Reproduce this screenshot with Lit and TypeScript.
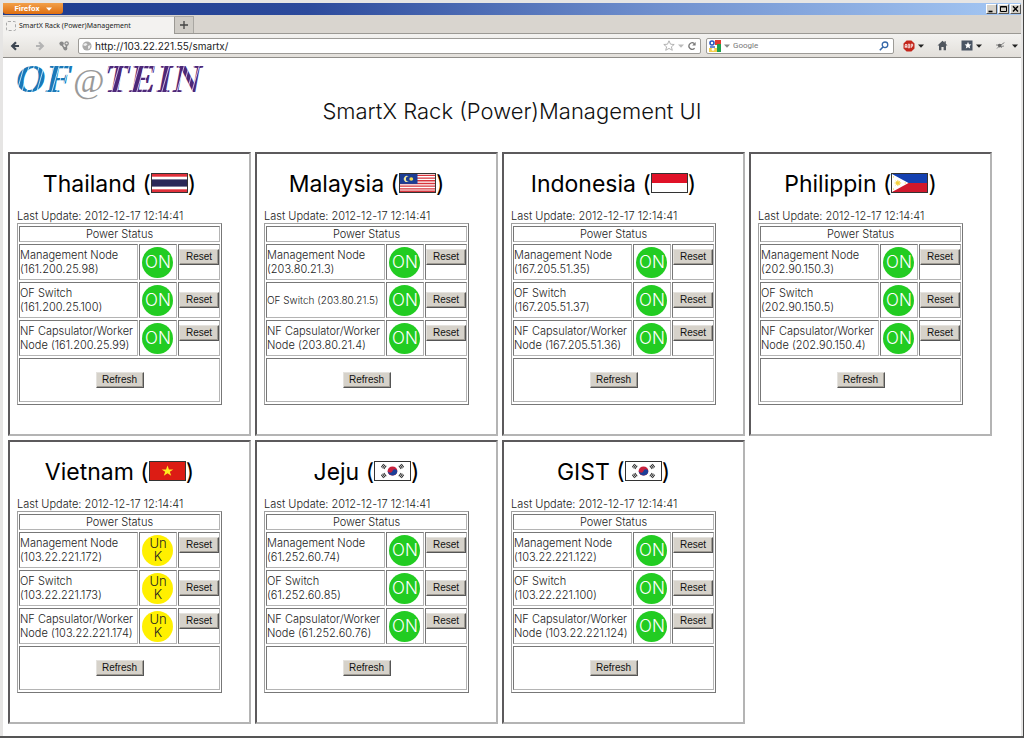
import { LitElement, html, svg, css } from "lit";
import { customElement, property } from "lit/decorators.js";
import { classMap } from "lit/directives/class-map.js";

type Status = "ON" | "Unk";

interface RackNode {
  name: string;
  ip: string;
  status: Status;
}

interface Site {
  name: string;
  flag: string;
  updated: string;
  nodes: RackNode[];
}

const UPDATED = "2012-12-17 12:14:41";

const site = (name: string, flag: string, ips: string[], status: Status = "ON"): Site => ({
  name,
  flag,
  updated: UPDATED,
  nodes: ["Management Node", "OF Switch", "NF Capsulator/Worker Node"].map((n, i) => ({
    name: n,
    ip: ips[i],
    status,
  })),
});

const SITES: Site[] = [
  site("Thailand", "th", ["161.200.25.98", "161.200.25.100", "161.200.25.99"]),
  site("Malaysia", "my", ["203.80.21.3", "203.80.21.5", "203.80.21.4"]),
  site("Indonesia", "id", ["167.205.51.35", "167.205.51.37", "167.205.51.36"]),
  site("Philippin", "ph", ["202.90.150.3", "202.90.150.5", "202.90.150.4"]),
  site("Vietnam", "vn", ["103.22.221.172", "103.22.221.173", "103.22.221.174"], "Unk"),
  site("Jeju", "kr", ["61.252.60.74", "61.252.60.85", "61.252.60.76"]),
  site("GIST", "kr", ["103.22.221.122", "103.22.221.100", "103.22.221.124"]),
];

// Longest "name (ip)" label that still fits the first column on one line.
const ONE_LINE = 23;

const koreaBars = (x: number, y: number, angle: number) => svg`
  <g transform="translate(${x} ${y}) rotate(${angle})" stroke="#222" stroke-width="1">
    <path d="M-2.2 -1.6H2.2M-2.2 0H2.2M-2.2 1.6H2.2" />
  </g>`;

const FLAGS: Record<string, unknown> = {
  th: svg`<rect width="36" height="20" fill="#e0303a" /><rect y="3" width="36" height="14" fill="#fff" /><rect y="6" width="36" height="8" fill="#2a2858" />`,
  my: svg`<rect width="36" height="20" fill="#fff" />
    <path d="M0 1.5H36M0 4.5H36M0 7.5H36M0 10.5H36M0 13.5H36M0 16.5H36M0 19.2H36" stroke="#d8343c" stroke-width="1.5" />
    <rect width="18" height="11" fill="#1c3d94" />
    <path d="M9 2.6A3.4 3.4 0 1 0 9 8.4A2.9 2.9 0 1 1 9 2.6Z" fill="#f2e9a0" />
    <circle cx="11.6" cy="5.5" r="2" fill="#f4dc50" />`,
  id: svg`<rect width="36" height="20" fill="#fff" /><rect width="36" height="10" fill="#e01228" />`,
  ph: svg`<rect width="36" height="20" fill="#d0182c" /><rect width="36" height="10" fill="#1440b0" />
    <path d="M0 0L17 10L0 20Z" fill="#fff" />
    <circle cx="6" cy="10" r="2" fill="#f6cf3a" />
    <path d="M6 6.6V13.4M2.6 10H9.4M3.6 7.6L8.4 12.4M8.4 7.6L3.6 12.4M1.5 2.5V4M1.5 16V17.5M13 10H14.4" stroke="#f6cf3a" stroke-width=".9" />`,
  vn: svg`<rect width="36" height="20" fill="#dc1c14" />
    <path d="M18 4L19.5 8.3H24L20.4 10.9L21.8 15.2L18 12.6L14.2 15.2L15.6 10.9L12 8.3H16.5Z" fill="#ffee20" />`,
  kr: svg`<rect width="36" height="20" fill="#fff" />
    <circle cx="18" cy="10" r="5" fill="#c8203c" />
    <path d="M13.2 8.6A2.5 2.5 0 0 0 18 10A2.5 2.5 0 0 1 22.9 11A5 5 0 1 1 13.2 8.6Z" fill="#1c3f98" />
    ${koreaBars(9, 5, -56)}${koreaBars(27, 5, 56)}${koreaBars(9, 15, 56)}${koreaBars(27, 15, -56)}`,
};

@customElement("site-panel")
export class SitePanel extends LitElement {
  @property({ attribute: false }) site!: Site;

  static styles = css`
    :host {
      display: block;
      box-sizing: border-box;
      min-height: 284px;
      border: 2px solid;
      border-color: #5c5a5c #b4b4b4 #b4b4b4 #5c5a5c;
      padding: 18px 27px 24px 7px;
      color: #222;
      font-family: Inter, "Liberation Sans", sans-serif;
      font-size: 11px;
      font-weight: 300;
      line-height: 14px;
    }
    .name {
      display: flex;
      justify-content: center;
      align-items: center;
      margin: 0 0 13px;
      color: #000;
      font-size: 23px;
      font-weight: 400;
      line-height: 24px;
      white-space: pre;
    }
    .flag {
      display: block;
      width: 37px;
      height: 20px;
      border: 1px solid #333;
      box-sizing: border-box;
      margin-bottom: 2px;
    }
    .updated {
      margin: 0;
      white-space: nowrap;
    }
    .status {
      width: 100%;
      table-layout: fixed;
      border: 1px solid;
      border-color: #a0a0a0 #777 #777 #a0a0a0;
      border-collapse: separate;
      border-spacing: 1px 2px;
    }
    .status th,
    .status td {
      box-sizing: border-box;
      padding: 0;
      border: 1px solid;
      border-color: #777 #b4b4b4 #b4b4b4 #777;
    }
    .lamp-col {
      width: 38px;
    }
    .action-col {
      width: 42px;
    }
    .status .title {
      height: 16px;
      font-weight: 300;
      text-align: center;
    }
    .status .node {
      height: 36px;
      font-weight: 300;
      text-align: left;
    }
    .status .short {
      font-size: 10px;
      white-space: nowrap;
    }
    .lamp {
      display: flex;
      align-items: center;
      justify-content: center;
      width: 31px;
      height: 31px;
      margin: 0 auto;
      border-radius: 50%;
      background: #22cc22;
      color: #fff;
      font-size: 17px;
      text-align: center;
    }
    .unknown {
      background: #fff000;
      color: #222;
      font-size: 13px;
      line-height: 13px;
    }
    .status .action {
      vertical-align: top;
      padding-top: 4px;
    }
    .status .centered {
      vertical-align: middle;
      padding-top: 0;
    }
    .button {
      display: block;
      box-sizing: border-box;
      width: 40px;
      height: 16px;
      padding: 0;
      border: 1px solid;
      border-color: #e4e2de #555 #555 #e4e2de;
      background: #d6d2ca;
      color: #111;
      font: 10px/14px "Liberation Sans", Arial, sans-serif;
      box-shadow: inset -1px -1px #a09c94;
    }
    .refresh {
      width: 48px;
      margin: 0 auto;
    }
    .status .footer {
      height: 44px;
    }
  `;

  render() {
    const s = this.site;
    return html`
      <h2 class="name">${s.name} (<svg class="flag" viewBox="0 0 36 20" preserveAspectRatio="none" role="img" aria-label="${s.name}">${FLAGS[s.flag]}</svg>)</h2>
      <p class="updated">Last Update: ${s.updated}</p>
      <table class="status">
        <colgroup>
          <col />
          <col class="lamp-col" />
          <col class="action-col" />
        </colgroup>
        <thead>
          <tr><th class="title" colspan="3">Power Status</th></tr>
        </thead>
        <tbody>
          ${s.nodes.map((n, i) => {
            const label = `${n.name} (${n.ip})`;
            return html`<tr>
              <th class=${classMap({ node: true, short: label.length <= ONE_LINE })} scope="row">${label}</th>
              <td>
                <div class=${classMap({ lamp: true, unknown: n.status === "Unk" })}>
                  ${n.status === "ON" ? "ON" : html`<span>Un<br />K</span>`}
                </div>
              </td>
              <td class=${classMap({ action: true, centered: i === 1 })}>
                <button class="button" type="button">Reset</button>
              </td>
            </tr>`;
          })}
          <tr>
            <td class="footer" colspan="3"><button class="button refresh" type="button">Refresh</button></td>
          </tr>
        </tbody>
      </table>
    `;
  }
}

@customElement("browser-chrome")
export class BrowserChrome extends LitElement {
  static styles = css`
    :host {
      display: block;
      font-family: Roboto, "Liberation Sans", sans-serif;
      font-size: 8px;
      color: #222;
    }
    button {
      padding: 0;
      border: 0;
      background: none;
      font: inherit;
      color: inherit;
    }
    svg {
      display: block;
    }
    .titlebar {
      display: flex;
      justify-content: space-between;
      height: 12px;
      background: linear-gradient(90deg, #1c3b8e, #2c4a9c 30%, #7191cf 65%, #a5c8f4);
    }
    .firefox {
      display: flex;
      align-items: center;
      justify-content: center;
      gap: 6px;
      width: 60px;
      height: 11px;
      border-radius: 0 0 3px 3px;
      background: linear-gradient(#f2a04a, #df6f10);
      color: #fff;
      font-weight: 700;
      line-height: 10px;
    }
    .controls {
      display: flex;
      align-items: center;
      gap: 1px;
    }
    .control {
      box-sizing: border-box;
      width: 11px;
      height: 10px;
      border: 1px solid;
      border-color: #fff #555 #555 #fff;
      background: #d6d2ca;
    }
    .tabs {
      display: flex;
      align-items: stretch;
      height: 19px;
      padding-top: 1px;
      box-sizing: border-box;
      border-bottom: 1px solid #9b9994;
      background: #d9d5cf;
    }
    .tab {
      display: flex;
      align-items: center;
      gap: 3px;
      width: 172px;
      margin-bottom: -1px;
      padding: 0 0 0 3px;
      box-sizing: border-box;
      border-right: 1px solid #9b9994;
      border-top: 1px solid #bbb;
      background: #f3f2f0;
      font: 7px "Noto Sans", sans-serif;
      white-space: nowrap;
    }
    .tab-icon {
      box-sizing: border-box;
      width: 10px;
      height: 10px;
      border: 1px dashed #aaa;
      border-radius: 2px;
    }
    .new-tab {
      display: grid;
      place-items: center;
      width: 19px;
      border: 1px solid #a9a7a2;
      border-width: 1px 1px 0 0;
      background: #cfccc6;
    }
    .toolbar {
      display: flex;
      align-items: center;
      height: 24px;
      box-sizing: border-box;
      padding: 0 3px 0 5px;
      border-bottom: 1px solid #8f8d89;
      background: linear-gradient(#f3f2f0, #e2dfda);
    }
    .nav {
      display: flex;
      gap: 11px;
      width: 70px;
      align-items: center;
    }
    .field {
      display: flex;
      align-items: center;
      gap: 3px;
      height: 16px;
      box-sizing: border-box;
      border: 1px solid #9d9b97;
      border-radius: 2px;
      background: #fff;
    }
    .address {
      flex: 1;
      padding: 0 3px;
    }
    .search {
      width: 188px;
      margin-left: 5px;
      padding: 0 4px 0 2px;
    }
    .input {
      flex: 1;
      min-width: 0;
      padding: 0;
      border: 0;
      outline: 0;
      background: none;
      color: #222;
      font: 10px/14px Inter, "Liberation Sans", sans-serif;
    }
    .query {
      font: 8px/14px Roboto, "Liberation Sans", sans-serif;
    }
    .query::placeholder {
      color: #777;
      opacity: 1;
    }
    .addons {
      display: flex;
      align-items: center;
      gap: 13px;
      margin-left: 9px;
    }
    .addon {
      display: flex;
      align-items: center;
      gap: 3px;
    }
  `;

  private caret(color = "#222") {
    return html`<svg width="6" height="4" viewBox="0 0 6 4"><path d="M0 .5H6L3 3.7Z" fill=${color} /></svg>`;
  }

  render() {
    return html`
      <div class="titlebar">
        <button class="firefox" type="button">Firefox ${this.caret("#fff")}</button>
        <div class="controls">
          <button class="control" type="button" aria-label="Minimize"><svg width="9" height="8"><path d="M1.5 6.5H5.5" stroke="#000" stroke-width="1.6" /></svg></button>
          <button class="control" type="button" aria-label="Maximize"><svg width="9" height="8"><path d="M1.5 1.5H7.5V6.5H1.5ZM1.5 2H7.5" fill="none" stroke="#000" /></svg></button>
          <button class="control" type="button" aria-label="Close"><svg width="9" height="8"><path d="M2 1.2L7 6.6M7 1.2L2 6.6" stroke="#000" stroke-width="1.4" /></svg></button>
        </div>
      </div>
      <div class="tabs">
        <button class="tab" type="button"><span class="tab-icon"></span>SmartX Rack (Power)Management</button>
        <button class="new-tab" type="button" aria-label="New tab"><svg width="8" height="8"><path d="M4 0V8M0 4H8" stroke="#444" stroke-width="1.3" /></svg></button>
      </div>
      <div class="toolbar">
        <div class="nav">
          <button type="button" aria-label="Back"><svg width="14" height="12" viewBox="0 0 14 12"><path d="M8 2.2L4.2 6L8 9.8M4 6H11" fill="none" stroke="#3d4652" stroke-width="2.2" /></svg></button>
          <button type="button" aria-label="Forward"><svg width="14" height="12" viewBox="0 0 14 12"><path d="M6 2.2L9.8 6L6 9.8M10 6H3" fill="none" stroke="#b4b4b4" stroke-width="2.2" /></svg></button>
          <button type="button" aria-label="Site tools"><svg width="12" height="12" viewBox="0 0 12 12"><circle cx="3.6" cy="3.6" r="2.2" fill="#8a8a8a" /><circle cx="8.6" cy="3.6" r="1.7" fill="none" stroke="#8a8a8a" stroke-width="1.2" /><path d="M3.4 4L7 9.5M8.6 4.5L8.4 8" stroke="#8a8a8a" stroke-width="1.4" /><circle cx="7.4" cy="8.6" r="1.9" fill="#8a8a8a" /></svg></button>
        </div>
        <div class="field address">
          <svg width="10" height="10" viewBox="0 0 10 10"><circle cx="5" cy="5" r="4.6" fill="#aaa" /><path d="M1.5 3L4 2L5.5 3.5L3.5 5L1.5 4.5ZM6 5L8.5 4L8 7L6.2 8.2Z" fill="#eee" /></svg>
          <input class="input" type="text" aria-label="Address" .value=${"http://103.22.221.55/smartx/"} />
          <svg width="12" height="11" viewBox="0 0 12 11"><path d="M6 .8L7.5 4.2L11.2 4.5L8.4 6.8L9.3 10.3L6 8.4L2.7 10.3L3.6 6.8L.8 4.5L4.5 4.2Z" fill="#fff" stroke="#aaa" stroke-width=".9" /></svg>
          ${this.caret("#bbb")}
          <button type="button" aria-label="Reload"><svg width="10" height="10" viewBox="0 0 10 10"><path d="M7.6 7.2A3.2 3.2 0 1 1 7.3 2.6" fill="none" stroke="#777" stroke-width="1.3" /><path d="M8.6 1V4.4H5.2Z" fill="#777" /></svg></button>
        </div>
        <div class="field search">
          <svg width="12" height="12" viewBox="0 0 12 12"><rect x="5" width="7" height="5" fill="#e23a2e" /><rect x="8" y="4" width="4" height="8" fill="#1fa04a" /><rect y="8" width="8" height="4" fill="#f4cf4c" /><rect width="6" height="8" fill="#fff" /><circle cx="3" cy="3" r="2" fill="none" stroke="#2a56c0" stroke-width="1.6" /><path d="M1 7H6" stroke="#2a56c0" stroke-width="1.4" /><circle cx="4" cy="9.4" r="1.4" fill="#fff" /></svg>
          ${this.caret("#888")}
          <input class="input query" type="text" aria-label="Search" placeholder="Google" />
          <button type="button" aria-label="Search"><svg width="10" height="10" viewBox="0 0 10 10"><circle cx="6" cy="3.8" r="2.8" fill="none" stroke="#3567a8" stroke-width="1.3" /><path d="M4 6L.8 9.2" stroke="#3567a8" stroke-width="1.6" /></svg></button>
        </div>
        <div class="addons">
          <button class="addon" type="button" aria-label="Ad blocker"><svg width="12" height="12" viewBox="0 0 12 12"><path d="M3.6 .5H8.4L11.5 3.6V8.4L8.4 11.5H3.6L.5 8.4V3.6Z" fill="#c4261c" /><path d="M2.2 8V5L3 4L3.8 5V8M2.2 6.6H3.8M5.2 4.2V7.8H6.6V4.2H5.2M8.2 8V4.2H9.6V6.2H8.2" fill="none" stroke="#fff" stroke-width=".8" /></svg>${this.caret()}</button>
          <button class="addon" type="button" aria-label="Home"><svg width="11" height="11" viewBox="0 0 11 11"><path d="M5.5 .8L.5 5.4H2V10.2H4.4V7H6.6V10.2H9V5.4H10.5L8.8 3.8V1.2H7.5V2.6Z" fill="#50565e" /></svg></button>
          <button class="addon" type="button" aria-label="Bookmarks"><svg width="12" height="11" viewBox="0 0 12 11"><rect x=".5" y=".5" width="11" height="10" fill="#4a5564" /><path d="M7 1.8L8 4.2L10.4 4.4L8.6 6L9.2 8.6L7 7.2L4.8 8.6L5.4 6L3.6 4.4L6 4.2Z" fill="#fff" /></svg>${this.caret()}</button>
          <button class="addon" type="button" aria-label="Add-on"><svg width="14" height="11" viewBox="0 0 14 11"><path d="M1 5H4M2 8.5L4 6.5M5 5.5L9.4 2.6M6 6.5L9 6M5 4L6.5 8" stroke="#888" stroke-width="1" fill="none" /><circle cx="4.6" cy="5.6" r="1.8" fill="#666" /></svg>${this.caret()}</button>
        </div>
      </div>
    `;
  }
}

@customElement("app-root")
export class AppRoot extends LitElement {
  static styles = css`
    :host {
      display: flex;
      flex-direction: column;
      box-sizing: border-box;
      min-height: 100vh;
      padding: 3px 2px 0 3px;
      border-right: 1px solid #444;
      border-bottom: 2px solid #555;
      background: #e6e5e4;
    }
    .page {
      flex: 1;
      padding: 0 5px 11px;
      background: #fff;
    }
    .logo {
      display: block;
      width: 216px;
      height: 48px;
      overflow: visible;
    }
    .logo-text {
      font: italic 700 41px "Liberation Serif", serif;
    }
    .logo-at {
      font-size: 34px;
      font-weight: 400;
    }
    .heading {
      margin: -10px 0 26px;
      color: #111;
      font: 300 22px/30px Inter, "Liberation Sans", sans-serif;
      text-align: center;
    }
    .sites {
      display: grid;
      grid-template-columns: repeat(auto-fill, 243px);
      gap: 4px;
    }
  `;

  render() {
    return html`
      <browser-chrome></browser-chrome>
      <main class="page">
        <svg class="logo" viewBox="0 0 216 48">
          <defs>
            <pattern id="blue" width="5" height="48" patternUnits="userSpaceOnUse" patternTransform="skewX(-16)"><rect width="5" height="48" fill="#1a78b8" /><rect x="3" width="1" height="48" fill="#b8def2" /></pattern>
            <pattern id="violet" width="5" height="48" patternUnits="userSpaceOnUse" patternTransform="skewX(-16)"><rect width="5" height="48" fill="#4c2878" /><rect x="3" width="1" height="48" fill="#cdb8e0" /></pattern>
          </defs>
          <text class="logo-text" x="8" y="34"><tspan fill="url(#blue)">OF</tspan><tspan class="logo-at" fill="#9a9a9a">@</tspan><tspan fill="url(#violet)">TEIN</tspan></text>
        </svg>
        <h1 class="heading">SmartX Rack (Power)Management UI</h1>
        <div class="sites">${SITES.map((s) => html`<site-panel .site=${s}></site-panel>`)}</div>
      </main>
    `;
  }
}
